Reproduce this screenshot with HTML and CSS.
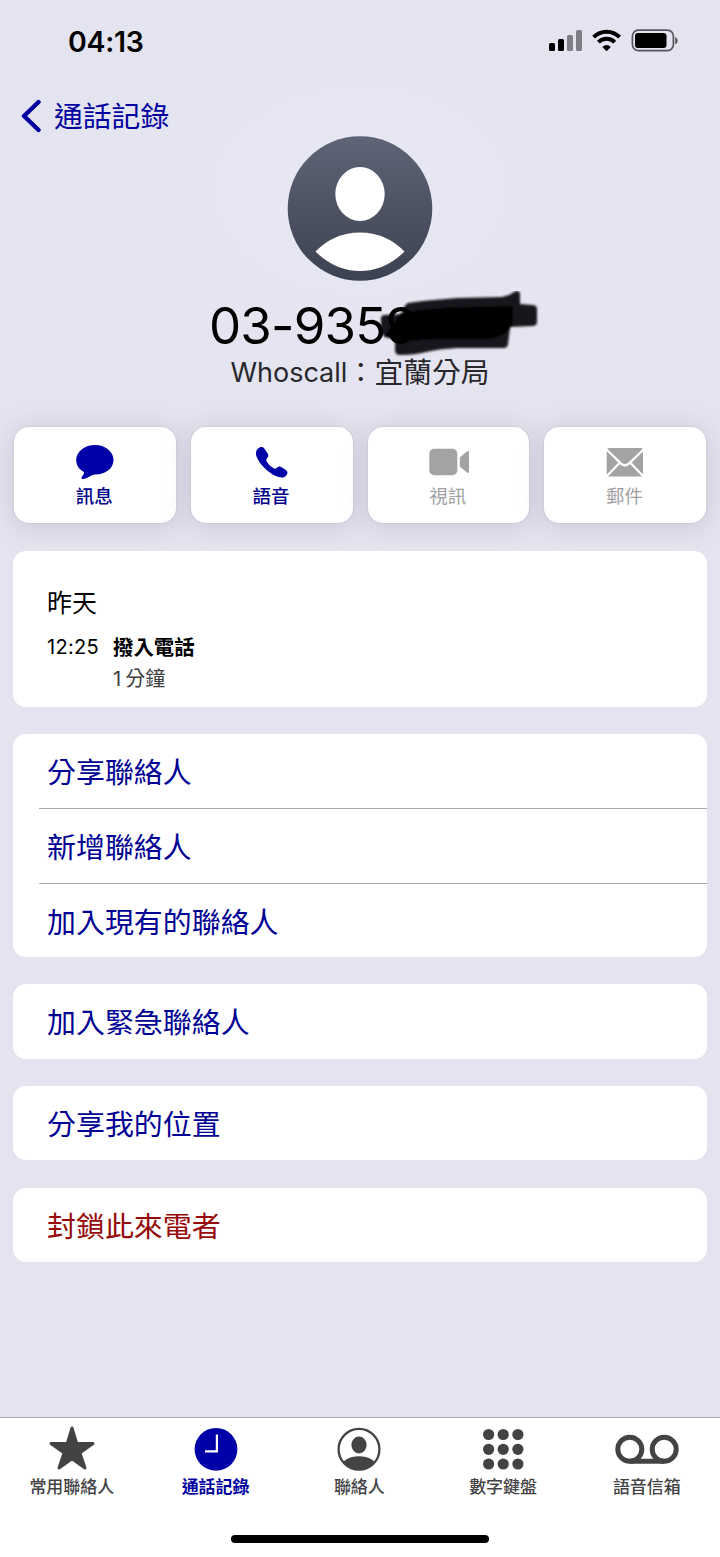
FILE: index.html
```
<!DOCTYPE html>
<html lang="zh-Hant">
<head>
<meta charset="utf-8">
<meta name="viewport" content="width=device-width">
<title>通話記錄</title>
<link rel="stylesheet" href="styles.css">
</head>
<body>
<div class="screen">
  <header class="status">
    <span class="clock">04:13</span>
    <svg class="status-icons" width="130" height="24" viewBox="0 0 130 24">
      <rect x="0" y="14" width="6" height="8" rx="1.5"/>
      <rect x="9" y="10" width="6" height="12" rx="1.5"/>
      <rect x="18" y="6" width="6" height="16" rx="1.5" fill="#7e7e87"/>
      <rect x="27" y="1" width="6" height="21" rx="1.5" fill="#7e7e87"/>
      <g fill="none" stroke="#000" stroke-width="4">
        <path d="M44.6 8.2a18.3 18.3 0 0 1 26 0"/>
        <path d="M49.4 13.2a11.6 11.6 0 0 1 16.4 0"/>
      </g>
      <path d="M57.6 22.3l-4.3-4.4q4.3-3.6 8.6 0z"/>
      <rect x="83.4" y="1.2" width="41" height="20.4" rx="6" fill="none" stroke="#55555c" stroke-width="1.7"/>
      <rect x="86" y="4" width="31.5" height="15" rx="3"/>
      <path d="M126.2 8v7.6q2.5-1.1 2.5-3.8t-2.5-3.8z" fill="#55555c"/>
    </svg>
  </header>
  <nav class="nav">
    <svg width="22" height="34" viewBox="0 0 22 34"><path d="M18.500 3L4 17l14.500 14" fill="none" stroke="#0000a0" stroke-width="4.400" stroke-linecap="round" stroke-linejoin="round"/></svg>
    <span>通話記錄</span>
  </nav>
  <section class="profile">
    <svg class="avatar" width="146" height="146" viewBox="0 0 146 146">
      <defs><linearGradient id="slate" x1="0" y1="0" x2="0" y2="1"><stop offset="0" stop-color="#5e6475"/><stop offset="1" stop-color="#3c4251"/></linearGradient></defs>
      <circle cx="73" cy="73.500" r="72.3" fill="url(#slate)"/>
      <ellipse cx="73" cy="59" rx="24.7" ry="27" fill="#fff"/>
      <path d="M28.5 116.500Q47 97.500 73 97.500t44.5 19Q98 136 73 136T28.500 116.500z" fill="#fff"/>
    </svg>
    <div class="number">
      <svg class="scribble" width="170" height="74" viewBox="0 0 170 74">
        <defs><filter id="soft"><feGaussianBlur stdDeviation="1"/></filter></defs>
        <g filter="url(#soft)">
          <path d="M10 27q0-3 4-3l17-1q1-8 6-11l15-2 34-3 45-1q7-1 12-5 6-3 6 3v9l12 1q5 0 5 4v13q0 4-5 4l-22 1-2 17q0 4-5 4l-46 0q-19 1-31 4-11 3-26 3-5 0-5-5V46l-8-1q-6 0-6-5z" fill="#17161a"/>
          <path d="M30 22q30-5 60-6l52-1v18q-8 14-27 15l-50 0-28 2-24-4z"/>
        </g>
      </svg>
      <span class="digits">03-9359</span>
    </div>
    <div class="source"><span>Whoscall：</span><span class="place">宜蘭分局</span></div>
  </section>
  <main>
    <section class="actions">
      <div class="action">
        <svg width="42" height="38" viewBox="0 0 42 38"><path d="M21 2C31 2 39.500 8.300 39.500 17S31 31.500 21 31.500C18 31.500 15 34.500 9.500 36 7.500 36.500 6.700 35 8 33.500 9.500 32 10 30.500 10 29 5 26.500 2.200 22.200 2.200 17 2.200 8.300 11 2 21 2z"/></svg>
        <span>訊息</span>
      </div>
      <div class="action">
        <svg width="42" height="38" viewBox="0 0 42 38"><path d="M6.800 5.800C9 3.600 11.800 3.200 13.500 5.700l3.200 4.800c1.300 2 .7 3.500-.8 5-1 1.300-.8 2.200.1 3.400 1.700 2.500 3.700 4.500 6.200 6.200 1.400 1 2.300 1 3.400 0 1.500-1.500 3-2.100 5-.8l4.300 2.800c2.500 1.700 1.700 4.400-.4 6.200C31 36 24.500 34 18.500 29.300 12.500 24.800 7 18.500 5.200 12.500 4.500 9.500 5.200 7.400 6.800 5.800z"/></svg>
        <span>語音</span>
      </div>
      <div class="action disabled">
        <svg width="42" height="38" viewBox="0 0 42 38"><g transform="translate(1.800)"><rect x=".5" y="5.800" width="28" height="26.500" rx="5"/><path d="M31 14.500l7-6q2.200-1.500 2.200 1.200v18.600q0 2.700-2.200 1.200l-7-6z"/></g></svg>
        <span>視訊</span>
      </div>
      <div class="action disabled">
        <svg width="42" height="38" viewBox="0 0 42 38"><rect x="2.700" y="5" width="36.300" height="28.500" rx="2"/><path d="M2 6l15.500 15q3.500 2.600 7 0L40 6M2.500 33.500L15 20.500M39.500 33.500L27 20.500" fill="none" stroke="#fff" stroke-width="2.300"/></svg>
        <span>郵件</span>
      </div>
    </section>
    <section class="card log">
      <div class="day">昨天</div>
      <div class="call"><span class="time">12:25</span><b>撥入電話</b><span class="duration">1<span class="unit">分鐘</span></span></div>
    </section>
    <section class="card">
      <div class="row">分享聯絡人</div>
      <div class="row ruled">新增聯絡人</div>
      <div class="row ruled">加入現有的聯絡人</div>
    </section>
    <section class="card"><div class="row">加入緊急聯絡人</div></section>
    <section class="card"><div class="row">分享我的位置</div></section>
    <section class="card"><div class="row danger">封鎖此來電者</div></section>
  </main>
  <footer class="tabbar">
    <div class="tabs">
      <div class="tab">
        <svg width="66" height="48" viewBox="0 0 66 48"><path d="M33 3l4.700 15.500H54L41 27.900 46 43 33 33.800 20 43l5-15.100L12 18.500h16.300z" stroke="#434346" stroke-width="3" stroke-linejoin="round"/></svg>
        <span>常用聯絡人</span>
      </div>
      <div class="tab current">
        <svg width="66" height="48" viewBox="0 0 66 48"><circle cx="33" cy="24.300" r="21.400"/><path d="M33.900 9.500v16.900H22" fill="none" stroke="#fff" stroke-width="2.200"/></svg>
        <span>通話記錄</span>
      </div>
      <div class="tab">
        <svg width="66" height="48" viewBox="0 0 66 48"><clipPath id="disc"><circle cx="33" cy="24.300" r="20.500"/></clipPath><circle cx="33" cy="24.300" r="20.400" fill="none" stroke="#434346" stroke-width="2.300"/><ellipse cx="33" cy="20" rx="7.600" ry="8.400"/><ellipse cx="33" cy="42.500" rx="18" ry="11.300" clip-path="url(#disc)"/></svg>
        <span>聯絡人</span>
      </div>
      <div class="tab">
        <svg width="66" height="48" viewBox="0 0 66 48"><g><circle cx="18.600" cy="9.500" r="5.600"/><circle cx="33.200" cy="9.500" r="5.600"/><circle cx="47.900" cy="9.500" r="5.600"/><circle cx="18.600" cy="24.300" r="5.600"/><circle cx="33.200" cy="24.300" r="5.600"/><circle cx="47.900" cy="24.300" r="5.600"/><circle cx="18.600" cy="39" r="5.600"/><circle cx="33.200" cy="39" r="5.600"/><circle cx="47.900" cy="39" r="5.600"/></g></svg>
        <span>數字鍵盤</span>
      </div>
      <div class="tab">
        <svg width="66" height="48" viewBox="0 0 66 48"><g fill="none" stroke="#434346" stroke-width="5"><circle cx="15.800" cy="24.300" r="12"/><circle cx="50.200" cy="24.300" r="12"/><path d="M15.800 36.300h34.400"/></g></svg>
        <span>語音信箱</span>
      </div>
    </div>
    <div class="home"></div>
  </footer>
</div>
</body>
</html>
```

FILE: styles.css
```
* { box-sizing: border-box; }
body {
  margin: 0;
  font-family: Inter, "Noto Sans CJK TC", sans-serif;
  color: #000;
}
svg { display: block; flex: none; }
.screen {
  width: 720px;
  height: 1557px;
  display: flex;
  flex-direction: column;
  background: radial-gradient(ellipse 360px 260px at 50% 190px, #e8e8f3, #e5e5f1 60%, #e4e4f0);
}
.status {
  height: 82px;
  display: flex;
  justify-content: space-between;
  align-items: center;
  padding: 0 41px 0 68px;
}
.clock { font-size: 28.500px; font-weight: 600; letter-spacing: -0.3px; }
.nav {
  height: 54px;
  display: flex;
  align-items: center;
  gap: 12px;
  padding: 14px 0 0 20px;
  color: #0000a0;
  font-size: 28.8px;
  line-height: 40px;
}
.nav span { padding-top: 2px; }
.profile {
  height: 291px;
  display: flex;
  flex-direction: column;
  align-items: center;
}
.avatar { margin-top: -1px; }
.number {
  position: relative;
  width: 302px;
  height: 68px;
  margin-top: 11px;
  font-size: 51px;
  line-height: 68px;
  letter-spacing: -0.8px;
  white-space: nowrap;
}
.digits { position: relative; }
.scribble { position: absolute; left: 162px; top: -1px; }
.source {
  display: flex;
  margin-top: -7px;
  font-size: 27px;
  line-height: 40px;
  color: #28282c;
}
.place { font-size: 28.8px; }
main { flex: 1; display: flex; flex-direction: column; gap: 27.500px; padding: 0 13px; }
.actions {
  display: grid;
  grid-template-columns: repeat(4, 1fr);
  gap: 15px;
  padding: 0 1px;
}
.action {
  height: 96px;
  display: flex;
  flex-direction: column;
  align-items: center;
  padding-top: 16px;
  border-radius: 15px;
  background: #fff;
  box-shadow: 0 0 2px #bcbcc6, 0 3px 24px #70709044;
  font-size: 18.500px;
  font-weight: 500;
  line-height: 30px;
  color: #00008c;
  fill: #0000a8;
}
.action span { margin-left: -1px; }
.disabled { color: #a0a0a2; fill: #a3a3a5; font-weight: 400; }
.card { border-radius: 13px; background: #fff; }
.log { height: 156px; padding: 34px 34px 0; }
.day { font-size: 25px; line-height: 37px; }
.call {
  display: grid;
  grid-template-columns: 66px auto;
  grid-auto-rows: 31px;
  margin-top: 10px;
  font-size: 20px;
  line-height: 31px;
}
.time { letter-spacing: 0.3px; }
.call b { font-size: 20.400px; }
.duration { grid-column: 2; color: #3c3c40; line-height: 32px; }
.unit { margin-left: 4px; }
.row {
  height: 74.300px;
  margin-left: 26px;
  padding: 2px 0 0 8px;
  font-size: 28.950px;
  line-height: 73px;
  color: #000094;
}
.ruled { border-top: 1px solid #acacb0; }
.danger { color: #960a0a; }
.tabbar { height: 140.500px; border-top: 1px solid #a9a9b0; background: #fff; }
.tabs { display: grid; grid-template-columns: repeat(5, 143.750px); }
.tab {
  display: flex;
  flex-direction: column;
  align-items: center;
  padding-top: 7px;
  font-size: 17px;
  font-weight: 500;
  line-height: 29px;
  color: #434346;
  fill: #434346;
}
.current { color: #0000a0; fill: #0000a8; font-weight: 700; }
.home { width: 258px; height: 8px; margin: 33.500px auto 0; border-radius: 4px; background: #000; }
```
